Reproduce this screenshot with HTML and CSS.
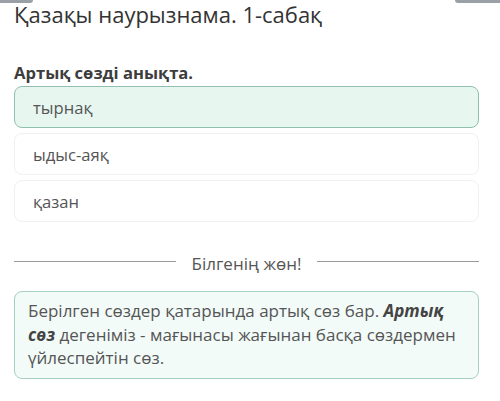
FILE: index.html
```html
<!DOCTYPE html>
<html lang="kk">
<head>
<meta charset="utf-8">
<title>Қазақы наурызнама. 1-сабақ</title>
<link rel="stylesheet" href="styles.css">
</head>
<body>
<div class="topbar">
  <span class="pill pill-left"></span>
  <span class="pill pill-right"></span>
</div>
<main class="page">
  <h1 class="title">Қазақы наурызнама. 1-сабақ</h1>
  <p class="question">Артық сөзді анықта.</p>
  <div class="options">
    <div class="option option-selected">тырнақ</div>
    <div class="option">ыдыс-аяқ</div>
    <div class="option">қазан</div>
  </div>
  <div class="divider">
    <span class="divider-line"></span>
    <span class="divider-text">Білгенің жөн!</span>
    <span class="divider-line"></span>
  </div>
  <div class="info">Берілген сөздер қатарында артық сөз бар. <b><i>Артық сөз</i></b> дегеніміз - мағынасы жағынан басқа сөздермен үйлеспейтін сөз.</div>
</main>
</body>
</html>
```
FILE: styles.css
```css
html, body {
  margin: 0;
  padding: 0;
  background: #ffffff;
}
body {
  font-family: "Open Sans", "Noto Sans", sans-serif;
  color: #555;
}
.topbar {
  display: flex;
  justify-content: space-between;
  height: 2px;
}
.pill {
  display: block;
  height: 3px;
  background: #9aa0a6;
}
.pill-left {
  width: 33px;
  border-radius: 0 0 3px 0;
}
.pill-right {
  width: 45px;
  border-radius: 0 0 0 3px;
}
.page {
  padding: 0 21px 0 14px;
}
.title {
  margin: 0;
  font-size: 22px;
  line-height: 24px;
  font-weight: 400;
  color: #333;
}
.question {
  margin: 36px 0 2px;
  font-size: 16.6px;
  line-height: 22px;
  font-weight: 700;
  color: #3d3d3d;
}
.options {
  display: flex;
  flex-direction: column;
  gap: 5px;
}
.option {
  box-sizing: border-box;
  height: 42px;
  display: flex;
  align-items: center;
  padding: 0 18px;
  border: 1.5px solid #f0f0f0;
  border-radius: 8px;
  font-size: 16.6px;
  color: #555;
  background: #fff;
}
.option-selected {
  background: #e7f7f0;
  border-color: #8fbfae;
}
.divider {
  display: flex;
  align-items: center;
  gap: 16px;
  margin-top: 31px;
  height: 22px;
}
.divider-line {
  flex: 1;
  height: 1px;
  background: #9a9a9a;
  margin-bottom: 6px;
}
.divider-text {
  font-size: 17px;
  line-height: 22px;
  color: #555;
}
.info {
  margin-top: 16px;
  box-sizing: border-box;
  height: 88px;
  padding: 7px 20px 7px 13px;
  border: 1.5px solid #a6cfc6;
  border-radius: 8px;
  background: #f3fbf9;
  font-size: 17px;
  line-height: 23.5px;
  color: #555;
}
.info b {
  color: #444;
}
```
